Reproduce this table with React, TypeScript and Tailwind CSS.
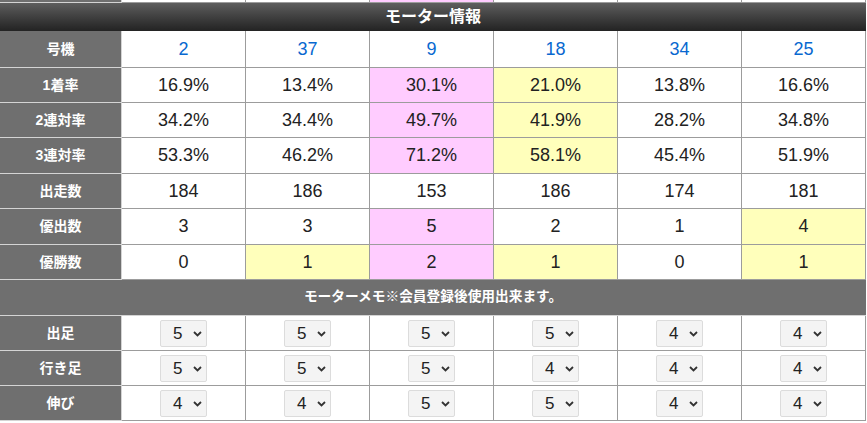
import React from 'react';

type Tone = 'w' | 'p' | 'y';

interface StatRow {
  label: string;
  values: string[];
  tones: Tone[];
  h: string;
  blue?: boolean;
}

const toneClass: Record<Tone, string> = {
  w: 'bg-white',
  p: 'bg-[#ffccff]',
  y: 'bg-[#ffffbb]',
};

const stats: StatRow[] = [
  { label: '号機', values: ['2', '37', '9', '18', '34', '25'], tones: ['w', 'w', 'w', 'w', 'w', 'w'], h: 'h-[37px]', blue: true },
  { label: '1着率', values: ['16.9%', '13.4%', '30.1%', '21.0%', '13.8%', '16.6%'], tones: ['w', 'w', 'p', 'y', 'w', 'w'], h: 'h-[35px]' },
  { label: '2連対率', values: ['34.2%', '34.4%', '49.7%', '41.9%', '28.2%', '34.8%'], tones: ['w', 'w', 'p', 'y', 'w', 'w'], h: 'h-[35px]' },
  { label: '3連対率', values: ['53.3%', '46.2%', '71.2%', '58.1%', '45.4%', '51.9%'], tones: ['w', 'w', 'p', 'y', 'w', 'w'], h: 'h-[36px]' },
  { label: '出走数', values: ['184', '186', '153', '186', '174', '181'], tones: ['w', 'w', 'w', 'w', 'w', 'w'], h: 'h-[35px]' },
  { label: '優出数', values: ['3', '3', '5', '2', '1', '4'], tones: ['w', 'w', 'p', 'w', 'w', 'y'], h: 'h-[36px]' },
  { label: '優勝数', values: ['0', '1', '2', '1', '0', '1'], tones: ['w', 'y', 'p', 'y', 'w', 'y'], h: 'h-[35px]' },
];

const memos: { label: string; values: string[]; h: string }[] = [
  { label: '出足', values: ['5', '5', '5', '5', '4', '4'], h: 'h-[35px]' },
  { label: '行き足', values: ['5', '5', '5', '4', '4', '4'], h: 'h-[35px]' },
  { label: '伸び', values: ['4', '4', '5', '5', '4', '4'], h: 'h-[35px]' },
];

const rowGrid = 'grid grid-cols-[122px_repeat(6,124px)]';
const labelCell = 'flex items-center justify-center bg-[#6f6f6f] text-white font-bold text-[14px] border-r border-b border-[#d4d4d4]';
const dataCell = 'flex items-center justify-center border-r border-b border-[#9c9c9c] text-[18px] text-[#222]';

const FakeSelect: React.FC<{ value: string }> = ({ value }) => (
  <div className="w-[47px] h-[27px] bg-[#f4f4f4] border border-[#dcdcdc] rounded-[2px] flex items-center pl-[12px] gap-[11px]">
    <span className="text-[17px] text-[#222] leading-none">{value}</span>
    <svg width="9" height="6" viewBox="0 0 9 6" className="mt-[1px]">
      <path d="M1 1l3.5 3.5L8 1" fill="none" stroke="#333" strokeWidth="1.8" />
    </svg>
  </div>
);

export default function App() {
  return (
    <div className="w-[867px] h-[423px] overflow-hidden bg-white font-['Liberation_Sans','Noto_Sans_CJK_JP',sans-serif]">
      {/* tail of the previous table */}
      <div className={`${rowGrid} h-[3px]`}>
        <div className="bg-[#6f6f6f] border-r border-b border-[#d4d4d4]" />
        {[0, 1, 2, 3, 4, 5].map(i => (
          <div key={i} className={`border-r border-b border-[#9c9c9c] ${i === 2 ? 'bg-[#ffccff]' : 'bg-white'}`} />
        ))}
      </div>

      <div className="w-[866px] h-[28px] bg-gradient-to-b from-[#5e5e5e] to-[#232323] flex items-center justify-center text-white font-bold text-[16px]">
        モーター情報
      </div>

      {stats.map(row => (
        <div key={row.label} className={`${rowGrid} ${row.h}`}>
          <div className={labelCell}>{row.label}</div>
          {row.values.map((v, i) => (
            <div key={i} className={`${dataCell} ${toneClass[row.tones[i]]} ${row.blue ? 'text-[#0868d0]' : ''}`}>
              {v}
            </div>
          ))}
        </div>
      ))}

      <div className="w-[866px] h-[36px] bg-[#6f6f6f] border-b border-[#d4d4d4] flex items-center justify-center text-white font-bold text-[13.7px]">
        モーターメモ※会員登録後使用出来ます。
      </div>

      {memos.map(row => (
        <div key={row.label} className={`${rowGrid} ${row.h}`}>
          <div className={labelCell}>{row.label}</div>
          {row.values.map((v, i) => (
            <div key={i} className={`${dataCell} bg-white`}>
              <FakeSelect value={v} />
            </div>
          ))}
        </div>
      ))}
    </div>
  );
}
